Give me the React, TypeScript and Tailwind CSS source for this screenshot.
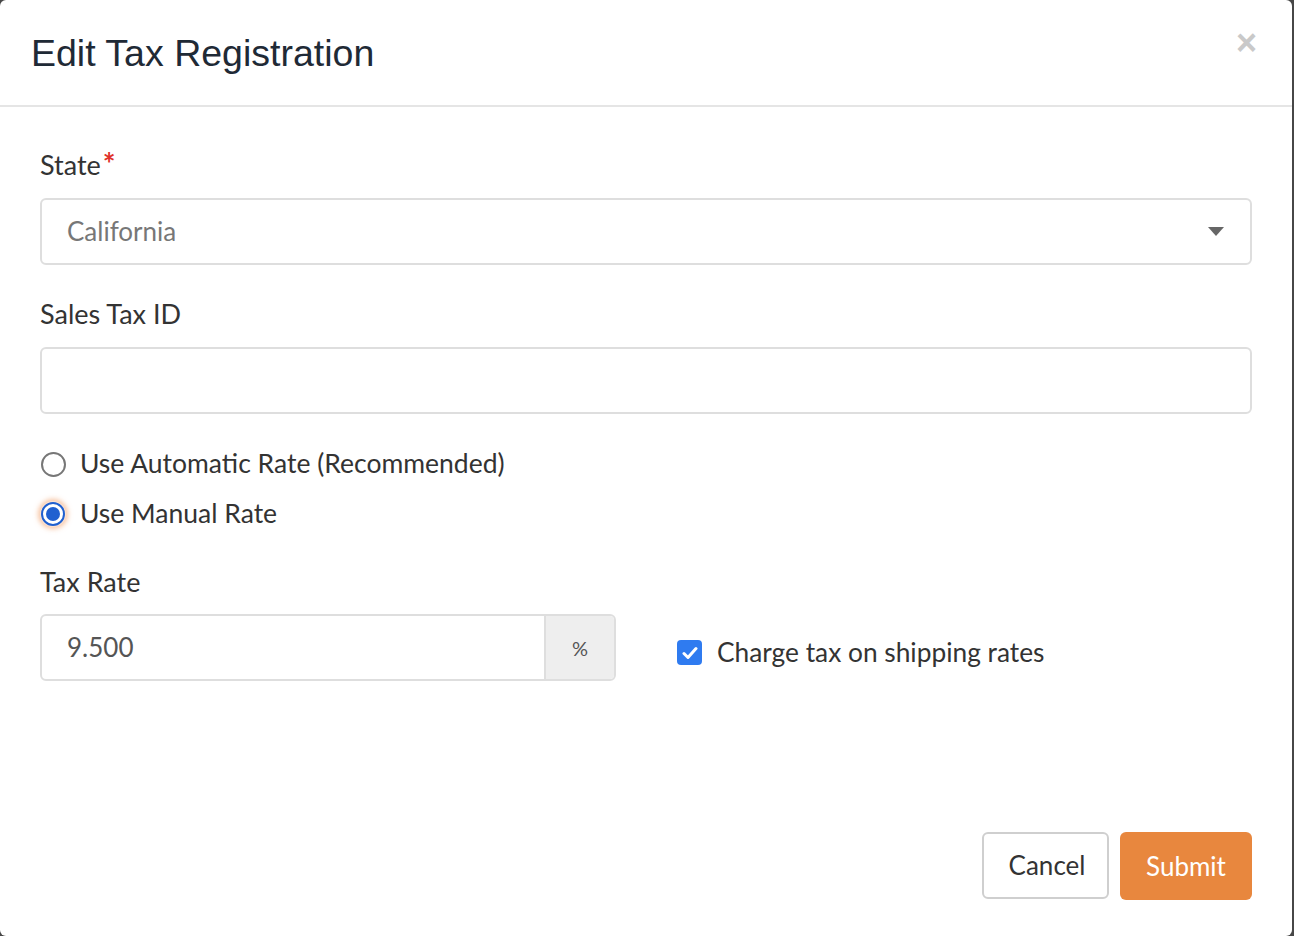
import React from 'react';

const body = { fontFamily: 'Lato, "Open Sans", sans-serif' };

function Label({ children, required }: { children: React.ReactNode; required?: boolean }) {
  return (
    <div className="text-[27px] leading-[30px] text-[#333]">
      {children}
      {required && <span className="text-[#e0312a] text-[30px] font-bold align-top leading-[26px] ml-[2px]">*</span>}
    </div>
  );
}

function Radio({ checked, label }: { checked?: boolean; label: string }) {
  return (
    <label className="flex items-center h-[30px]">
      {checked ? (
        <span className="w-[26px] h-[26px] rounded-full bg-[#fbe3d3] flex items-center justify-center shadow-[0_0_5px_2px_rgba(240,150,90,0.55)]">
          <span className="w-[24px] h-[24px] rounded-full border-2 border-[#2060d0] bg-white flex items-center justify-center">
            <span className="w-[14px] h-[14px] rounded-full bg-[#2060d0]" />
          </span>
        </span>
      ) : (
        <span className="ml-px w-[25px] h-[25px] rounded-full border-2 border-[#777] bg-white" />
      )}
      <span className="ml-[14px] text-[26.5px] text-[#333]">{label}</span>
    </label>
  );
}

export default function App() {
  return (
    <div className="w-[1294px] h-[936px] bg-[#474747] overflow-hidden" style={body}>
      <div className="w-[1292px] h-[936px] bg-white rounded-[6px] flex flex-col">
        <div className="h-[107px] border-b-2 border-[#e5e5e5] flex items-center justify-between pl-[31px] pr-[35px] shrink-0">
          <h1
            className="text-[37.5px] text-[#1f2a36] pt-[1px]"
            style={{ fontFamily: '"Liberation Sans", Arial, sans-serif' }}
          >
            Edit Tax Registration
          </h1>
          <span
            className="text-[36px] leading-none font-bold text-[#c9c9c9] mb-[20px]"
            style={{ fontFamily: '"Liberation Sans", Arial, sans-serif' }}
          >
            ×
          </span>
        </div>

        <div className="flex-1 flex flex-col px-10 pt-[43px]">
          <Label required>State</Label>
          <div className="mt-[18px] h-[67px] border-2 border-[#dedede] rounded-[6px] flex items-center justify-between pl-[25px] pr-[26px]">
            <span className="text-[26px] text-[#777]">California</span>
            <svg width="16" height="9" viewBox="0 0 16 9">
              <path d="M0 0h16L8 9z" fill="#666" />
            </svg>
          </div>

          <div className="mt-[34px]">
            <Label>Sales Tax ID</Label>
          </div>
          <div className="mt-[18px] h-[67px] border-2 border-[#dedede] rounded-[6px]" />

          <div className="mt-[35px] flex flex-col gap-[20px]">
            <Radio label="Use Automatic Rate (Recommended)" />
            <Radio checked label="Use Manual Rate" />
          </div>

          <div className="mt-[38px]">
            <Label>Tax Rate</Label>
          </div>
          <div className="mt-[17px] flex items-center">
            <div className="w-[576px] h-[67px] border-2 border-[#dedede] rounded-[6px] flex overflow-hidden">
              <div className="flex-1 flex items-center pl-[25px] text-[26px] text-[#555]">9.500</div>
              <div className="w-[70px] bg-[#eeeeee] border-l-2 border-[#dedede] flex items-center justify-center text-[20px] text-[#555]">
                %
              </div>
            </div>
            <label className="ml-[61px] mt-[10px] flex items-center">
              <span className="w-[25px] h-[25px] rounded-[4px] bg-[#2f7bf0] flex items-center justify-center">
                <svg width="16" height="14" viewBox="0 0 16 14">
                  <path d="M2 7.5l4 4L14 2.5" fill="none" stroke="#fff" strokeWidth="3" strokeLinecap="round" strokeLinejoin="round" />
                </svg>
              </span>
              <span className="ml-[15px] text-[26.3px] text-[#333]">Charge tax on shipping rates</span>
            </label>
          </div>

          <div className="mt-auto mb-[36px] flex justify-end gap-[11px]">
            <button className="w-[127px] h-[67px] border-2 border-[#cfcfcf] rounded-[6px] bg-white text-[26px] text-[#333] pl-[3px]">
              Cancel
            </button>
            <button className="w-[132px] h-[68px] rounded-[6px] bg-[#e8873e] text-[26px] text-white">
              Submit
            </button>
          </div>
        </div>
      </div>
    </div>
  );
}
